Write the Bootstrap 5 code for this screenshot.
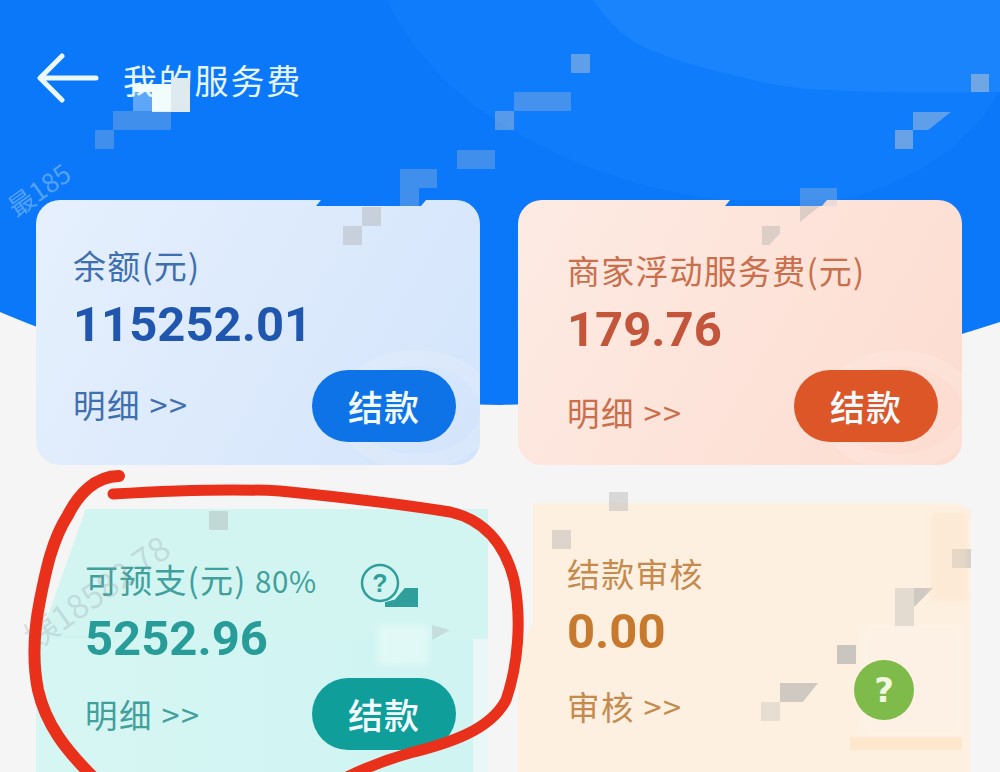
<!DOCTYPE html>
<html lang="zh">
<head>
<meta charset="utf-8">
<title>我的服务费</title>
<link href="https://cdn.jsdelivr.net/npm/bootstrap@5.3.0/dist/css/bootstrap.min.css" rel="stylesheet">
<style>
html,body{margin:0;height:772px;overflow:hidden;background:#f5f5f5}
body{font-family:"Noto Sans CJK SC","Noto Sans",sans-serif}
.stage{width:1000px;height:772px;overflow:hidden;background:#f5f5f5}
.hero-art,.ink{position:absolute;left:0;top:0;width:1000px;height:772px;pointer-events:none}
.ink{z-index:5}
.topbar{height:200px;padding:53px 0 0 37px;color:#e6f6ff}
.topbar svg{width:62px;height:50px;margin-right:24px}
.topbar h1{font-size:34px;font-weight:400;margin:0;line-height:54px;letter-spacing:1.8px}
.tiles{display:grid;grid-template-columns:444px 444px;column-gap:38px;row-gap:44px;padding-left:36px}
.tile{height:265px;border-radius:24px;position:relative;overflow:hidden}
.tile>*{position:relative;z-index:1}
.tile-b{background:linear-gradient(120deg,#e6f0fd,#d3e4fb);padding:42px 24px 0 37px}
.tile-o{background:linear-gradient(120deg,#fdebe3,#fddcd0);padding:47px 24px 0 49px}
.tile-t{background:linear-gradient(#d2f5f2,#d2f5f2) 0 0/100% 130px no-repeat,linear-gradient(90deg,#d6f6f3 0,#cff4f2 437px,#e9f8f6 437px);width:459px;border-radius:0;padding:47px 0 0 49px;height:268px;clip-path:polygon(50px 0,452px 0,452px 100%,0 100%,0 140px)}
.tile-y{width:452px;padding:41px 0 0 49px;height:264px;overflow:visible;border-radius:0}
.tile-y::before{content:"";position:absolute;left:0;top:-6px;right:0;bottom:0;z-index:0;background:#fdf0e1;clip-path:polygon(15px 0,440px 0,452px 8px,452px 270px,0 270px,0 150px,15px 120px)}
.swirl{position:absolute!important;width:160px;height:120px;border:16px solid #fff;border-radius:50%;opacity:.14;z-index:0!important;left:300px;top:150px}
.lbl{font-size:33px;line-height:46px;letter-spacing:1.2px}
.pct{font-size:29.5px;letter-spacing:.6px}
.amt{font-family:Roboto,sans-serif;font-weight:700;font-size:49px;line-height:58px;margin-top:8px}
.lnk{font-size:32.5px;line-height:46px;letter-spacing:1.4px}
.c-b{color:#3f6fae}.c-bb{color:#2057ae}
.c-o{color:#c96f4b}.c-ob{color:#c2553a}
.c-t{color:#41a09c}.c-tb{color:#279c98}
.c-y{color:#c48a4e}.c-yb{color:#c77a2d}
.tile-b .lnk{margin-top:27px}
.tile-o .lnk{margin-top:30px}
.tile-t .amt{margin-top:7px}
.tile-t .lnk{margin-top:23px}
.tile-y .amt{margin-top:7px}
.tile-y .lnk{margin-top:22px}
.pay{position:absolute!important;left:276px;top:170px;width:144px;height:72px;border-radius:36px;border:0;color:#f2fbff;font-size:35px;font-weight:500;line-height:72px;padding:0;letter-spacing:1px;z-index:2}
.pay-b{background:#0f73e8}.pay-o{background:#dd5627}.pay-t{background:#0f9e9a;top:169px}
.helpmark{position:absolute!important;left:324px;top:54px;width:40px;height:40px}
.helpdot{position:absolute!important;left:336px;top:151px;width:60px;height:60px;border-radius:50%;background:#7fbb4a;color:#f2f7df;font:700 34px/60px "DejaVu Sans",sans-serif;text-align:center;z-index:4}
.px{position:absolute;background:#a9a9a9;opacity:.38;z-index:3}
.pxb{background:#c4c8d0;opacity:.3}
.blurred{filter:blur(3px)}
.notch{position:absolute;top:200px;height:6px;background:#0a78f8;z-index:2;clip-path:polygon(5px 0,calc(100% - 5px) 0,100% 0,calc(100% - 5px) 100%,0 100%)}
.wm{position:absolute;color:#9aa0a8;opacity:.3;font-size:33px;line-height:1;transform:rotate(-35deg);white-space:nowrap;z-index:3}
.wm-w{color:#fff;opacity:.3;font-size:26px}
</style>
</head>
<body>
<div class="stage position-relative">
  <svg class="hero-art" viewBox="0 0 1000 772">
    <path fill="#0a78f8" d="M0 0H1000V322C860 368 700 402 500 405C300 402 130 368 0 312Z"/>
    <path fill="#0e7cfb" d="M387 0C420 70 480 115 530 140C600 180 700 205 800 205C890 200 970 150 1000 90V0Z"/>
    <path fill="#1a84fd" d="M593 0C610 25 630 42 650 50C680 62 710 70 733 75C770 85 800 90 833 90C880 93 950 93 1000 92V0Z"/>
  </svg>
  <div class="topbar d-flex align-items-start position-relative">
    <svg viewBox="0 0 62 50"><path d="M59 25H4M25 3L3 25L25 47" fill="none" stroke="#eaf8ff" stroke-width="5" stroke-linecap="round" stroke-linejoin="round"/></svg>
    <h1>我的服务费</h1>
  </div>
  <div class="tiles position-relative">
    <section class="tile tile-b">
      <div class="swirl"></div>
      <div class="lbl c-b">余额(元)</div>
      <div class="amt c-bb">115252.01</div>
      <div class="lnk c-b">明细 &gt;&gt;</div>
      <button class="btn pay pay-b">结款</button>
    </section>
    <section class="tile tile-o">
      <div class="swirl"></div>
      <div class="lbl c-o">商家浮动服务费(元)</div>
      <div class="amt c-ob">179.76</div>
      <div class="lnk c-o">明细 &gt;&gt;</div>
      <button class="btn pay pay-o">结款</button>
    </section>
    <section class="tile tile-t">
      <div class="lbl c-t"><span>可预支(元)</span> <span class="pct">80%</span></div>
      <div class="amt c-tb">5252.96</div>
      <div class="lnk c-t">明细 &gt;&gt;</div>
      <svg class="helpmark" viewBox="0 0 40 40"><circle cx="20" cy="20" r="18" fill="none" stroke="#2f9f9b" stroke-width="2.5"/><text x="20" y="29" font-family="Liberation Sans" font-weight="700" font-size="25" text-anchor="middle" fill="#2f9f9b">?</text></svg>
      <button class="btn pay pay-t">结款</button>
    </section>
    <section class="tile tile-y">
      <div class="lbl c-y">结款审核</div>
      <div class="amt c-yb">0.00</div>
      <div class="lnk c-y">审核 &gt;&gt;</div>
      <div class="helpdot">?</div>
    </section>
  </div>
  <div class="notch" style="left:316px;width:110px"></div>
  <div class="notch" style="left:725px;width:102px"></div>
  <span class="wm wm-w" style="left:4px;top:176px">最185</span>
  <span class="wm" style="left:12px;top:575px">姨18582 78</span>
  <div class="px" style="left:133px;top:92px;width:19px;height:19px;background:#dcebf8;opacity:.4"></div>
  <div class="px" style="left:152px;top:92px;width:19px;height:20px;background:#f1fcfd;opacity:1"></div>
  <div class="px" style="left:133px;top:84px;width:38px;height:8px;background:#f1fcfd;opacity:1"></div>
  <div class="px" style="left:171px;top:78px;width:19px;height:34px;background:#dfeaf0;opacity:1"></div>
  <div class="px pxb" style="left:113px;top:111px;width:58px;height:19px"></div>
  <div class="px pxb" style="left:95px;top:130px;width:19px;height:19px"></div>
  <div class="px pxb" style="left:571px;top:54px;width:19px;height:19px;opacity:.45"></div>
  <div class="px pxb" style="left:514px;top:92px;width:57px;height:19px"></div>
  <div class="px pxb" style="left:495px;top:111px;width:19px;height:19px;opacity:.4"></div>
  <div class="px pxb" style="left:457px;top:150px;width:38px;height:19px"></div>
  <div class="px pxb" style="left:400px;top:169px;width:37px;height:19px"></div>
  <div class="px pxb" style="left:400px;top:188px;width:19px;height:18px"></div>
  <div class="px" style="left:362px;top:207px;width:19px;height:19px"></div>
  <div class="px" style="left:343px;top:226px;width:19px;height:19px"></div>
  <div class="px pxb" style="left:971px;top:74px;width:18px;height:18px;opacity:.5"></div>
  <div class="px pxb" style="left:913px;top:112px;width:38px;height:18px;opacity:.45;clip-path:polygon(0 0,100% 0,40% 100%,0 100%)"></div>
  <div class="px pxb" style="left:895px;top:130px;width:18px;height:19px;opacity:.5"></div>
  <div class="px pxb" style="left:800px;top:188px;width:37px;height:18px"></div>
  <div class="px" style="left:800px;top:206px;width:20px;height:16px;clip-path:polygon(0 0,100% 0,0 100%)"></div>
  <div class="px" style="left:762px;top:226px;width:18px;height:19px;clip-path:polygon(0 0,100% 0,100% 40%,40% 100%,0 100%)"></div>
  <div class="px" style="left:209px;top:511px;width:19px;height:19px"></div>
  <div class="px" style="left:609px;top:492px;width:19px;height:19px"></div>
  <div class="px" style="left:552px;top:530px;width:19px;height:19px"></div>
  <div class="px" style="left:952px;top:549px;width:19px;height:19px;opacity:.5"></div>
  <div class="px" style="left:895px;top:588px;width:19px;height:38px;opacity:.3"></div>
  <div class="px" style="left:914px;top:588px;width:19px;height:19px;opacity:.55;clip-path:polygon(0 0,100% 0,0 100%)"></div>
  <div class="px" style="left:837px;top:645px;width:19px;height:19px;opacity:.6"></div>
  <div class="px" style="left:780px;top:683px;width:38px;height:19px;opacity:.55;clip-path:polygon(0 0,100% 0,60% 100%,0 100%)"></div>
  <div class="px" style="left:761px;top:702px;width:19px;height:19px;opacity:.25"></div>
  <div class="px" style="left:385px;top:588px;width:33px;height:19px;background:#2f9f9b;opacity:1;clip-path:polygon(0 100%,0 75%,30% 60%,60% 0,100% 0,100% 100%)"></div>
  <div class="px" style="left:432px;top:625px;width:18px;height:15px;opacity:.3;clip-path:polygon(0 0,100% 35%,0 100%)"></div>
  <div class="px blurred" style="left:378px;top:625px;width:50px;height:40px;background:#eefcfa;opacity:.55"></div>
  <div class="px blurred" style="left:930px;top:512px;width:38px;height:90px;background:#fde4c9;opacity:.45"></div>
  <div class="px blurred" style="left:860px;top:625px;width:102px;height:110px;background:#fdf3e9;opacity:.6;z-index:0"></div>
  <div class="px" style="left:850px;top:737px;width:112px;height:13px;background:#fde3c5;opacity:.7"></div>
  <svg class="ink" viewBox="0 0 1000 772">
    <path d="M119 476C95 476 78 495 68 515C52 540 46 570 40 600C34 630 32 660 38 690C46 725 66 750 92 776" fill="none" stroke="#e8301a" stroke-width="12" stroke-linecap="round"/>
    <path d="M113 494C180 490 240 489 280 491C340 497 400 504 450 512C485 520 505 545 514 580C522 620 518 665 506 700C490 730 450 743 410 753C385 760 365 768 345 778" fill="none" stroke="#e8301a" stroke-width="11" stroke-linecap="round"/>
  </svg>
</div>
<script src="https://cdn.jsdelivr.net/npm/bootstrap@5.3.0/dist/js/bootstrap.bundle.min.js"></script>
</body>
</html>
